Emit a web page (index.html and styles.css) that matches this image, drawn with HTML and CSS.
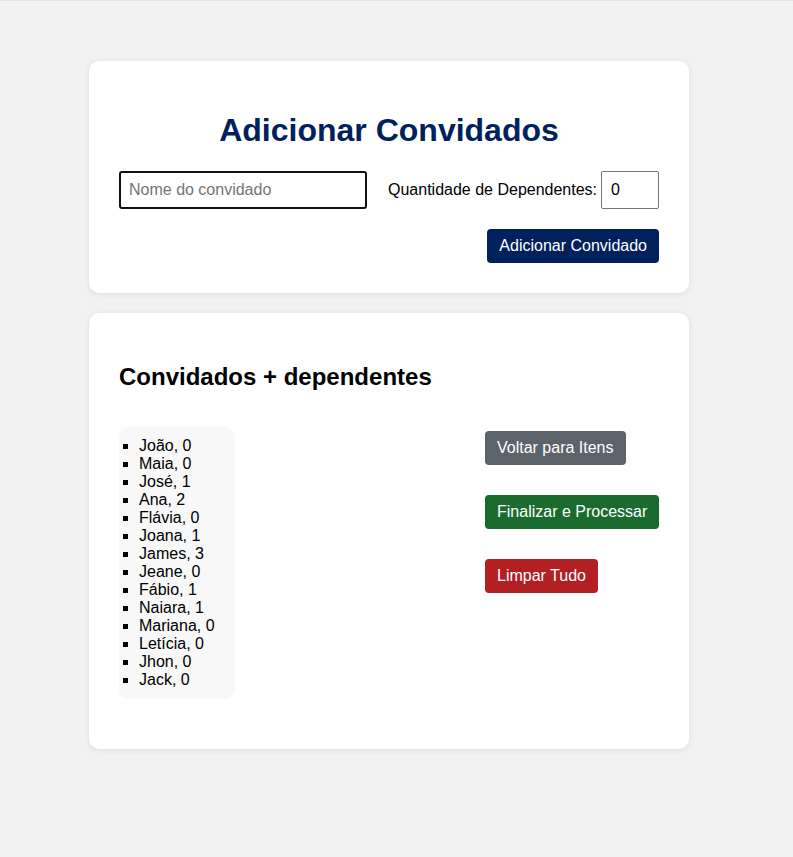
FILE: index.html
```html
<!DOCTYPE html>
<html lang="pt-BR">
<head>
<meta charset="utf-8">
<title>Adicionar Convidados</title>
<link rel="stylesheet" href="styles.css">
</head>
<body>
<main class="container">
  <section class="card">
    <h1 class="title">Adicionar Convidados</h1>
    <div class="form-row">
      <input class="name-input" type="text" placeholder="Nome do convidado">
      <label class="dep-label" for="dep">Quantidade de Dependentes:</label>
      <input class="num-input" id="dep" type="text" value="0">
    </div>
    <div class="actions">
      <button class="btn btn-primary">Adicionar Convidado</button>
    </div>
  </section>

  <section class="card card-list">
    <h2 class="subtitle">Convidados + dependentes</h2>
    <div class="list-row">
      <ul class="guest-list">
        <li>João, 0</li>
        <li>Maia, 0</li>
        <li>José, 1</li>
        <li>Ana, 2</li>
        <li>Flávia, 0</li>
        <li>Joana, 1</li>
        <li>James, 3</li>
        <li>Jeane, 0</li>
        <li>Fábio, 1</li>
        <li>Naiara, 1</li>
        <li>Mariana, 0</li>
        <li>Letícia, 0</li>
        <li>Jhon, 0</li>
        <li>Jack, 0</li>
      </ul>
      <div class="side-buttons">
        <button class="btn btn-gray">Voltar para Itens</button>
        <button class="btn btn-green">Finalizar e Processar</button>
        <button class="btn btn-red">Limpar Tudo</button>
      </div>
    </div>
  </section>
</main>
</body>
</html>
```

FILE: styles.css
```css
html, body {
  margin: 0;
}

body {
  background: #f1f1f1;
  border-top: 1px solid #e4e4e4;
  padding: 60px 15px 80px 0;
  font-family: "Liberation Sans", Arial, sans-serif;
  font-size: 16px;
  color: #000;
}

.container {
  width: 600px;
  margin: 0 auto;
  display: flex;
  flex-direction: column;
  gap: 20px;
}

.card {
  background: #fff;
  border-radius: 10px;
  box-shadow: 0 1px 6px rgba(0, 0, 0, 0.08);
  padding: 30px;
  box-sizing: border-box;
}

.title {
  margin: 21px 0 22px;
  text-align: center;
  font-size: 32px;
  font-weight: bold;
  color: #00215c;
  line-height: 37px;
}

.form-row {
  display: flex;
  align-items: center;
  height: 38px;
}

.name-input {
  flex: 0 0 248px;
  width: 248px;
  height: 38px;
  box-sizing: border-box;
  border: 2px solid #111;
  border-radius: 3px;
  padding: 0 8px;
  font-family: inherit;
  font-size: 16px;
  color: #000;
  outline: none;
}

.name-input::placeholder {
  color: #757575;
}

.dep-label {
  flex: 0 0 auto;
  white-space: nowrap;
  margin-left: 21px;
  margin-right: 4px;
}

.num-input {
  flex: 0 0 58px;
  width: 58px;
  height: 38px;
  box-sizing: border-box;
  border: 1px solid #767676;
  border-radius: 2px;
  padding: 0 9px;
  font-family: inherit;
  font-size: 16px;
  color: #000;
}

.actions {
  display: flex;
  justify-content: flex-end;
  margin-top: 20px;
}

.btn {
  border: none;
  border-radius: 4px;
  padding: 0 12px;
  height: 34px;
  white-space: nowrap;
  font-family: inherit;
  font-size: 16px;
  color: #fff;
  cursor: pointer;
}

.btn-primary { background: #00215c; }
.btn-gray { background: #5c636a; }
.btn-green { background: #1b6b2e; }
.btn-red { background: #b22024; }

.card-list {
  padding-bottom: 34px;
}

.subtitle {
  margin: 20px 0;
  font-size: 24px;
  font-weight: bold;
  line-height: 27px;
}

.list-row {
  display: flex;
  justify-content: space-between;
  align-items: flex-start;
}

.guest-list {
  margin: 17px 0 16px;
  padding: 10px 20px 10px 20px;
  background: #f8f8f8;
  border-radius: 10px;
  list-style: square;
  line-height: 18px;
}

.side-buttons {
  display: flex;
  flex-direction: column;
  align-items: flex-start;
  gap: 30px;
  padding-top: 21px;
  width: 174px;
}
```
